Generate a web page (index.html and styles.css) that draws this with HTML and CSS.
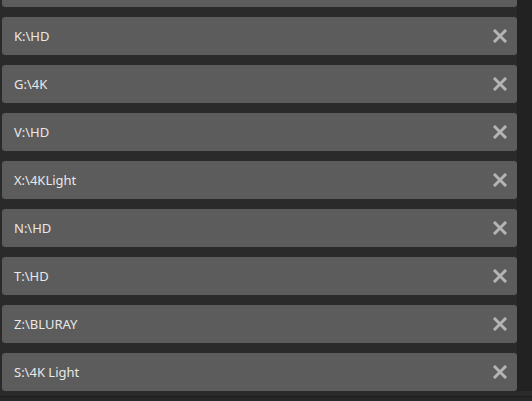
FILE: index.html
```html
<!DOCTYPE html>
<html lang="en">
<head>
	<meta charset="utf-8">
	<title>Folders</title>
	<link rel="stylesheet" href="styles.css">
</head>
<body>
	<div class="frame">
		<div class="view">
			<ul class="list">
				<li class="item"><span></span><button class="del" title="Remove"><svg viewBox="0 0 14 14"><path d="M2 2L12 12M12 2L2 12"/></svg></button></li>
				<li class="item"><span>K:\HD</span><button class="del" title="Remove"><svg viewBox="0 0 14 14"><path d="M2 2L12 12M12 2L2 12"/></svg></button></li>
				<li class="item"><span>G:\4K</span><button class="del" title="Remove"><svg viewBox="0 0 14 14"><path d="M2 2L12 12M12 2L2 12"/></svg></button></li>
				<li class="item"><span>V:\HD</span><button class="del" title="Remove"><svg viewBox="0 0 14 14"><path d="M2 2L12 12M12 2L2 12"/></svg></button></li>
				<li class="item"><span>X:\4KLight</span><button class="del" title="Remove"><svg viewBox="0 0 14 14"><path d="M2 2L12 12M12 2L2 12"/></svg></button></li>
				<li class="item"><span>N:\HD</span><button class="del" title="Remove"><svg viewBox="0 0 14 14"><path d="M2 2L12 12M12 2L2 12"/></svg></button></li>
				<li class="item"><span>T:\HD</span><button class="del" title="Remove"><svg viewBox="0 0 14 14"><path d="M2 2L12 12M12 2L2 12"/></svg></button></li>
				<li class="item"><span>Z:\BLURAY</span><button class="del" title="Remove"><svg viewBox="0 0 14 14"><path d="M2 2L12 12M12 2L2 12"/></svg></button></li>
				<li class="item"><span>S:\4K Light</span><button class="del" title="Remove"><svg viewBox="0 0 14 14"><path d="M2 2L12 12M12 2L2 12"/></svg></button></li>
			</ul>
			<div class="track"></div>
		</div>
		<div class="foot"></div>
	</div>
</body>
</html>
```

FILE: styles.css
```css
html,body{margin:0;padding:0;height:100%;}
body{background:#2a2a2a;font-family:"Noto Sans",sans-serif;overflow:hidden;}

.frame{height:100vh;display:flex;flex-direction:column;}
.view{flex:1;display:flex;overflow:hidden;min-height:0;}
.list{flex:1;list-style:none;margin:-31px 0 0;padding:0 0 0 2px;display:flex;flex-direction:column;gap:10px;}
.track{width:15px;background:#222;}
.foot{height:4px;border-top:1px solid #1e1e1e;background:#262626;margin-top:5px;}

.item{height:38px;flex:none;display:flex;align-items:center;justify-content:space-between;background:#5c5c5c;border-radius:3px;padding:0 10px 0 12px;color:#e8e8e8;font-size:13px;}
.del{border:0;background:none;padding:0;width:14px;height:14px;display:flex;cursor:pointer;}
.del svg{width:14px;height:14px;stroke:#b4b4b4;stroke-width:3;stroke-linecap:square;fill:none;}
```
